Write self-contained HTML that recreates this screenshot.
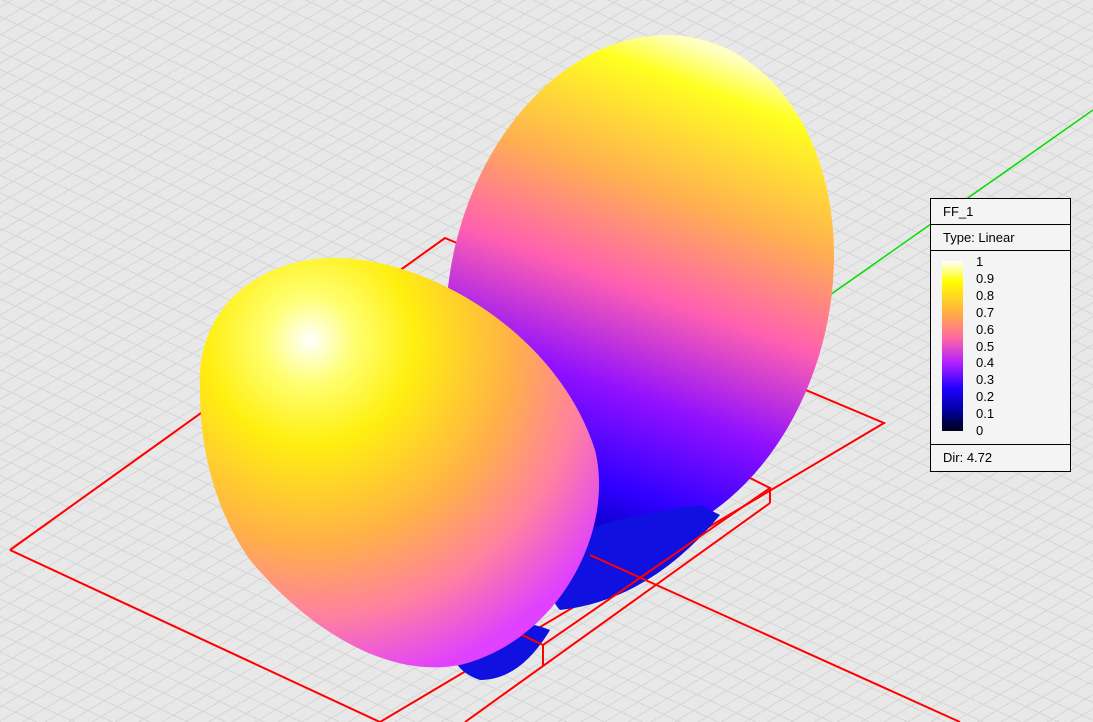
<!DOCTYPE html>
<html><head><meta charset="utf-8"><style>
html,body{margin:0;padding:0;width:1093px;height:722px;overflow:hidden;background:#e8e8e8;font-family:"Liberation Sans",sans-serif}
.bg{position:absolute;left:0;top:0;width:1093px;height:722px;
background:
repeating-linear-gradient(25deg, transparent 0 15px, #d6d6d6 15px 16px),
repeating-linear-gradient(-31deg, transparent 0 11px, #d6d6d6 11px 12px),#e8e8e8;}
svg{position:absolute;left:0;top:0}
.leg{position:absolute;left:930px;top:198px;width:139px;height:272px;border:1px solid #000;background:#f4f4f4;font-size:13px;color:#000}
.leg .r{border-bottom:1px solid #000;padding-left:12px;height:25px;line-height:25px}
</style></head><body>
<div class="bg"></div>
<svg width="1093" height="722" viewBox="0 0 1093 722">
<defs>
<radialGradient id="front" cx="310" cy="340" r="370" gradientUnits="userSpaceOnUse">
<stop offset="0" stop-color="#ffffff"/>
<stop offset="0.12" stop-color="#ffff70"/>
<stop offset="0.28" stop-color="#ffef10"/>
<stop offset="0.55" stop-color="#ffb048"/>
<stop offset="0.75" stop-color="#ff80a0"/>
<stop offset="0.95" stop-color="#e040ff"/>
</radialGradient>
<linearGradient id="back" x1="660" y1="40" x2="600" y2="540" gradientUnits="userSpaceOnUse">
<stop offset="0" stop-color="#ffffc0"/>
<stop offset="0.08" stop-color="#ffff20"/>
<stop offset="0.3" stop-color="#ffb050"/>
<stop offset="0.5" stop-color="#ff60b0"/>
<stop offset="0.7" stop-color="#9010ff"/>
<stop offset="0.88" stop-color="#3000ff"/>
<stop offset="1" stop-color="#0000c0"/>
</linearGradient>
</defs>
<g stroke="#f00" stroke-width="2" fill="none">
<polyline points="10,550 445,238 884,423 380,722"/>
<line x1="10" y1="550" x2="380" y2="722"/>
</g>
<line x1="830" y1="295" x2="1093" y2="110" stroke="#00dd00" stroke-width="1.5"/>
<ellipse cx="640" cy="290" rx="190" ry="258" transform="rotate(13 640 290)" fill="url(#back)"/>
<path d="M560 540 Q600 520 700 505 L720 515 Q650 600 560 610 Q540 590 560 540Z" fill="#1010e0"/>
<path d="M450 640 Q500 610 550 630 Q520 680 480 680 Q450 670 450 640Z" fill="#1010e0"/>
<path d="M200,390 C195,300 270,255 340,258 C440,262 560,340 595,450 C615,530 560,640 460,665 C380,680 300,620 250,560 C215,510 200,450 200,390Z" fill="url(#front)"/>
<g stroke="#f00" stroke-width="2" fill="none">
<polyline points="522,635 543,645 770,488 750,478"/>
<line x1="543" y1="645" x2="543" y2="665"/>
<line x1="770" y1="488" x2="770" y2="503"/>
<line x1="465" y1="722" x2="770" y2="503"/>
<line x1="590" y1="555" x2="960" y2="722"/>
</g>
</svg>
<div class="leg">
<div class="r">FF_1</div>
<div class="r">Type: Linear</div>
<div style="position:relative;height:193px;border-bottom:1px solid #000">
<div style="position:absolute;left:11px;top:10px;width:21px;height:170px;background:linear-gradient(#fff 0%,#ffff00 12%,#ffb040 30%,#ff6aa0 45%,#b020ff 60%,#2000ff 75%,#0000a0 88%,#000018 100%)"></div>
<div style="position:absolute;left:45px;top:3px;line-height:16.9px;font-size:13px">1<br>0.9<br>0.8<br>0.7<br>0.6<br>0.5<br>0.4<br>0.3<br>0.2<br>0.1<br>0</div>
</div>
<div style="padding-left:12px;height:25px;line-height:25px">Dir: 4.72</div>
</div>
</body></html>
